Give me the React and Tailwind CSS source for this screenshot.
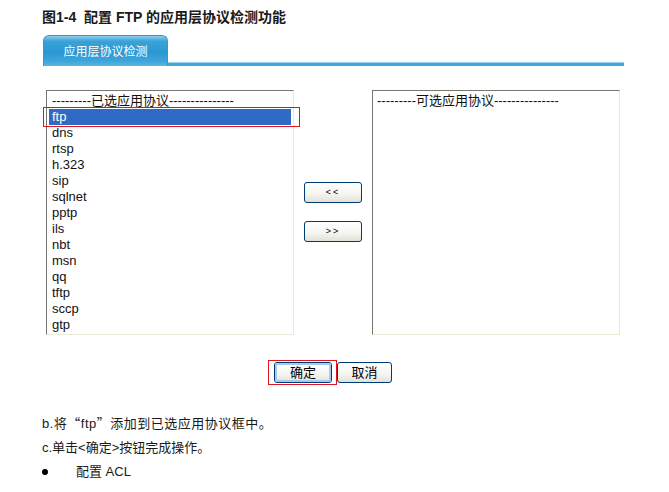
import React from "react";

const items = ["dns", "rtsp", "h.323", "sip", "sqlnet", "pptp", "ils", "nbt", "msn", "qq", "tftp", "sccp", "gtp"];

const listFont = { fontFamily: '"Liberation Sans", "Noto Sans CJK SC", sans-serif' };

function XPButton({ children, className = "", focused = false }) {
  return (
    <div
      className={`flex items-center justify-center rounded-[3px] border border-[#003c74] bg-[linear-gradient(180deg,#ffffff_0%,#f4f4f0_60%,#e3e1d6_100%)] text-black ${className}`}
    >
      {focused ? (
        <div className="flex h-full w-full items-center justify-center rounded-[2px] border-2 border-[#a8c8ef]">
          {children}
        </div>
      ) : (
        children
      )}
    </div>
  );
}

export default function App() {
  return (
    <div
      className="relative h-[492px] w-[669px] overflow-hidden bg-white text-[#111]"
      style={{ fontFamily: '"Liberation Sans", "Noto Sans CJK SC", sans-serif' }}
    >
      <div className="pl-[42px] pt-[9px]">
        <div className="text-[14px] font-bold leading-[16px] text-[#1a1a1a]">
          图1-4&nbsp;&nbsp;配置 FTP 的应用层协议检测功能
        </div>

        {/* tab bar */}
        <div className="mt-[10px] flex w-[582px] items-end pl-[1px]">
          <div className="flex h-[31px] w-[125px] items-center justify-center rounded-t-[6px] border border-b-0 border-[#3b95c6] bg-[linear-gradient(180deg,#8bcdee_0%,#3aa2d8_18%,#2b98d2_55%,#3ea6dc_85%,#5cb6e4_100%)] pt-[2px] text-[12px] text-white">
            应用层协议检测
          </div>
          <div className="h-[4px] flex-1 border-t border-[#9ad4f0] bg-[#44a8dc]" />
        </div>

        {/* lists */}
        <div className="mt-[24px] flex pl-[4px]">
          <div className="relative">
            <div
              className="h-[245px] w-[248px] border border-b-[#ece9d8] border-l-[#77776f] border-r-[#ece9d8] border-t-[#77776f] bg-white px-[2px] pt-[2px] text-[13px] leading-[16px]"
              style={listFont}
            >
              <div className="pl-[3px]">---------已选应用协议---------------</div>
              <div className="bg-[#316ac5] pl-[3px] text-white">ftp</div>
              {items.map((it) => (
                <div key={it} className="pl-[3px]">
                  {it}
                </div>
              ))}
            </div>
            <div className="absolute left-[-3px] top-[17px] h-[20px] w-[257px] border border-[#e0141e]" />
          </div>

          <div className="ml-[10px] flex w-[58px] flex-col pt-[92px]">
            <XPButton className="h-[21px] text-[9px]">
              <span className="tracking-[2px]">&lt;&lt;</span>
            </XPButton>
            <XPButton className="mt-[18px] h-[21px] text-[9px]">
              <span className="tracking-[2px]">&gt;&gt;</span>
            </XPButton>
          </div>

          <div
            className="ml-[10px] h-[245px] w-[248px] border border-b-[#ece9d8] border-l-[#77776f] border-r-[#ece9d8] border-t-[#77776f] bg-white px-[2px] pt-[2px] text-[13px] leading-[16px]"
            style={listFont}
          >
            <div className="pl-[2px]">---------可选应用协议---------------</div>
          </div>
        </div>

        {/* ok / cancel */}
        <div className="mt-[27px] flex pl-[232px]">
          <div className="relative">
            <XPButton focused className="h-[21px] w-[58px] text-[13px]">
              确定
            </XPButton>
            <div className="absolute left-[-6px] top-[-2px] h-[25px] w-[69px] border border-[#e0141e]" />
          </div>
          <XPButton className="ml-[5px] h-[21px] w-[55px] text-[13px]">取消</XPButton>
        </div>

        {/* text */}
        <div className="mt-[28px] text-[13px] leading-[24px] text-[#1a1a1a]">
          <div className="tracking-[0.5px]">
            b.将
            <span className="font-['Noto_Sans_CJK_SC',sans-serif]">“</span>
            ftp
            <span className="font-['Noto_Sans_CJK_SC',sans-serif]">”</span>
            添加到已选应用协议框中。
          </div>
          <div>c.单击&lt;确定&gt;按钮完成操作。</div>
          <div className="flex items-center">
            <span className="inline-block h-[6px] w-[6px] rounded-full bg-black" />
            <span className="ml-[28px]">配置 ACL</span>
          </div>
        </div>
      </div>
    </div>
  );
}
